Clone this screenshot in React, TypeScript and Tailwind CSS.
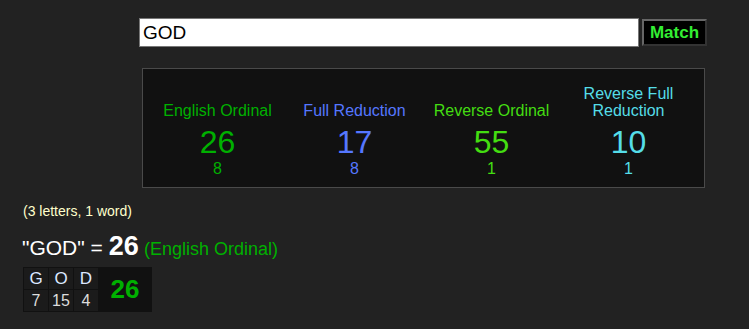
import React, { useState } from "react";

interface Cipher {
  name: string;
  value: number;
  reduced: number;
  color: string;
}

const ciphers: Cipher[] = [
  { name: "English Ordinal", value: 26, reduced: 8, color: "text-[#00b000]" },
  { name: "Full Reduction", value: 17, reduced: 8, color: "text-[#5577ff]" },
  { name: "Reverse Ordinal", value: 55, reduced: 1, color: "text-[#44dd11]" },
  { name: "Reverse Full Reduction", value: 10, reduced: 1, color: "text-[#55dde8]" },
];

const letters = [
  { ch: "G", val: 7 },
  { ch: "O", val: 15 },
  { ch: "D", val: 4 },
];

function App() {
  const [phrase, setPhrase] = useState("GOD");

  return (
    <div className="min-h-screen w-[749px] h-[329px] bg-[#222222] font-['Liberation_Sans',Arial,sans-serif] overflow-hidden">

      {/* SEARCH */}
      <div className="flex items-center pl-[139px] pt-[18px]">
        <input
          type="text"
          value={phrase}
          onChange={(e) => setPhrase(e.target.value)}
          className="w-[500px] h-[29px] bg-white border border-[#777777] px-[3px] text-[19px] text-black outline-none"
        />
        <button className="ml-[3px] h-[27px] w-[65px] bg-black border-2 border-t-[#666666] border-l-[#666666] border-b-[#333333] border-r-[#333333] text-[#33ee33] font-bold text-[17px] leading-none">
          Match
        </button>
      </div>

      {/* CIPHER PANEL */}
      <div className="ml-[142px] mt-[21px] w-[563px] h-[120px] bg-[#111111] border border-[#4a4a4a] px-[6px] flex items-end pb-[9px]">
        {ciphers.map((c) => (
          <div key={c.name} className={`w-[137px] flex flex-col items-center ${c.color}`}>
            <div className="text-[16px] leading-[17px] text-center">
              {c.name}
            </div>
            <div className="text-[32px] leading-[36px] mt-[5px]">
              {c.value}
            </div>
            <div className="text-[16px] leading-[18px]">
              {c.reduced}
            </div>
          </div>
        ))}
      </div>

      {/* SUMMARY */}
      <div className="pl-[23px] mt-[15px] text-[14px] leading-[16px] text-[#ffffcc]">
        (3 letters, 1 word)
      </div>

      <div className="pl-[22px] mt-[14px] h-[26px] flex items-baseline leading-[26px]">
        <span className="text-white text-[21px]">"GOD" =</span>
        <span className="text-white text-[27px] font-bold ml-[6px]">26</span>
        <span className="text-[#00b000] text-[18px] ml-[5px]">(English Ordinal)</span>
      </div>

      {/* LETTER TABLE */}
      <div className="ml-[23px] mt-[8px] flex w-fit bg-[#111111] p-px gap-px">
        <div className="grid grid-cols-3 gap-px">
          {letters.map((l) => (
            <div key={l.ch} className="w-[24px] h-[21px] bg-[#1b1b1b] flex items-center justify-center text-[#dde8ff] text-[17px]">
              {l.ch}
            </div>
          ))}
          {letters.map((l) => (
            <div key={l.ch + "v"} className="w-[24px] h-[21px] bg-[#1b1b1b] flex items-center justify-center text-[#dddddd] text-[16px]">
              {l.val}
            </div>
          ))}
        </div>
        <div className="w-[52px] flex items-center justify-center text-[#00b000] font-bold text-[26px]">
          26
        </div>
      </div>

    </div>
  );
}

export default App;
